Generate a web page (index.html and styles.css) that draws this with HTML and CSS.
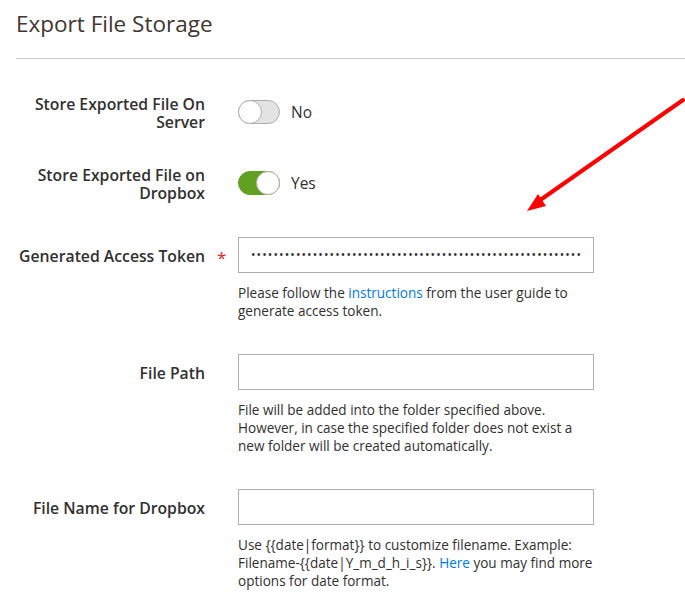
FILE: index.html
```html
<!DOCTYPE html>
<html lang="en">
<head>
<meta charset="utf-8">
<title>Export File Storage</title>
<link rel="stylesheet" href="styles.css">
</head>
<body>
<div class="page">
  <h2 class="title">Export File Storage</h2>
  <div class="form">
    <div class="row row-toggle">
      <label class="label">Store Exported File On Server</label>
      <span class="req"></span>
      <div class="control">
        <div class="switch-wrap">
          <span class="switch"><span class="knob"></span></span>
          <span class="switch-text">No</span>
        </div>
      </div>
    </div>
    <div class="row row-toggle">
      <label class="label">Store Exported File on Dropbox</label>
      <span class="req"></span>
      <div class="control">
        <div class="switch-wrap">
          <span class="switch on"><span class="knob"></span></span>
          <span class="switch-text">Yes</span>
        </div>
      </div>
    </div>
    <div class="row row-input">
      <label class="label">Generated Access Token</label>
      <span class="req">*</span>
      <div class="control">
        <div class="input dots">•••••••••••••••••••••••••••••••••••••••••••••••••••••••••••</div>
        <p class="note">Please follow the <a href="#">instructions</a> from the user guide to generate access token.</p>
      </div>
    </div>
    <div class="row row-input">
      <label class="label">File Path</label>
      <span class="req"></span>
      <div class="control">
        <div class="input"></div>
        <p class="note">File will be added into the folder specified above. However, in case the specified folder does not exist a new folder will be created automatically.</p>
      </div>
    </div>
    <div class="row row-input">
      <label class="label">File Name for Dropbox</label>
      <span class="req"></span>
      <div class="control">
        <div class="input"></div>
        <p class="note">Use {{date|format}} to customize filename. Example: Filename-{{date|Y_m_d_h_i_s}}. <a href="#">Here</a> you may find more options for date format.</p>
      </div>
    </div>
  </div>
  <svg class="arrow" width="685" height="610" viewBox="0 0 685 610" aria-hidden="true">
    <line x1="683" y1="100" x2="536" y2="203" stroke="#ff0000" stroke-width="4" stroke-linecap="round"/>
    <polygon points="527,211 538,194 546,206" fill="#ff0000"/>
  </svg>
</div>
</body>
</html>
```
FILE: styles.css
```css
html, body {
  margin: 0;
  padding: 0;
  background: #ffffff;
}
body {
  font-family: "Open Sans", "DejaVu Sans", sans-serif;
  color: #303030;
}
.page {
  position: relative;
  width: 685px;
  height: 610px;
  overflow: hidden;
}
.title {
  margin: 0 0 0 16px;
  padding-top: 8px;
  height: 59px;
  box-sizing: border-box;
  border-bottom: 1px solid #cccccc;
  font-size: 22.5px;
  line-height: 32px;
  font-weight: 400;
  color: #41362f;
}
.form {
  display: flex;
  flex-direction: column;
  padding-top: 36px;
  gap: 34px;
}
.row {
  display: grid;
  grid-template-columns: 205px 33px 356px;
  align-items: start;
}
.row-toggle {
  margin-bottom: 1px;
}
.label {
  text-align: right;
  font-size: 15.75px;
  line-height: 18px;
  font-weight: 600;
  color: #303030;
  padding-left: 10px;
}
.row-input .label {
  padding-top: 10px;
}
.req {
  color: #e22626;
  font-size: 17px;
  line-height: 18px;
  padding-top: 12px;
  padding-left: 12px;
}
.control {
  display: flex;
  flex-direction: column;
}
.switch-wrap {
  display: flex;
  align-items: center;
  gap: 11px;
  margin-top: 5px;
}
.switch {
  position: relative;
  display: block;
  width: 42px;
  height: 24px;
  box-sizing: border-box;
  border: 1px solid #adadad;
  border-radius: 12px;
  background: #e3e3e3;
}
.switch .knob {
  position: absolute;
  top: -1px;
  left: -1px;
  width: 24px;
  height: 24px;
  box-sizing: border-box;
  border: 1px solid #adadad;
  border-radius: 50%;
  background: #ffffff;
}
.switch.on {
  background: #62a024;
  border-color: #62a024;
}
.switch.on .knob {
  left: auto;
  right: -1px;
}
.switch-text {
  font-size: 15.5px;
  line-height: 18px;
  color: #303030;
}
.input {
  height: 36px;
  box-sizing: border-box;
  border: 1px solid #adadad;
  background: #ffffff;
}
.dots {
  padding: 0 0 0 12px;
  font-size: 12px;
  line-height: 34px;
  letter-spacing: 1.1px;
  color: #303030;
  white-space: nowrap;
  overflow: hidden;
}
.note {
  margin: 11px 0 0 0;
  font-size: 13.55px;
  line-height: 18px;
  color: #303030;
}
.note a {
  color: #007bdb;
  text-decoration: none;
}
.arrow {
  position: absolute;
  left: 0;
  top: 0;
  pointer-events: none;
}
```
